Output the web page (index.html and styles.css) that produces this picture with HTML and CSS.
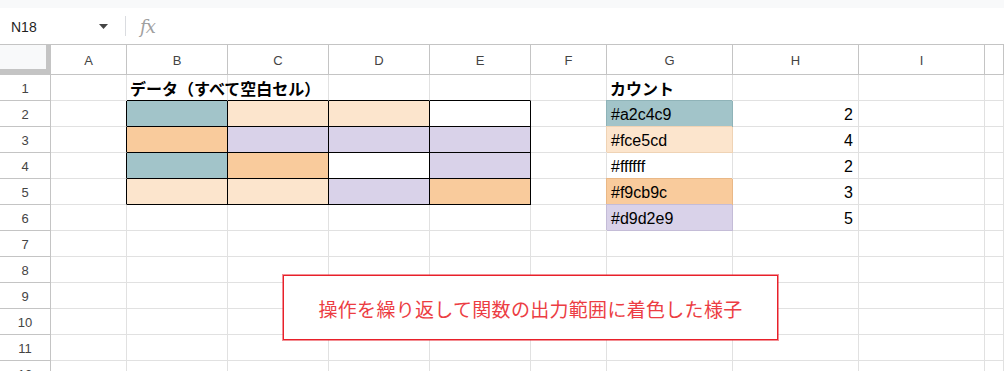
FILE: index.html
```html
<!DOCTYPE html>
<html lang="ja">
<head>
<meta charset="utf-8">
<title>Sheet</title>
<link rel="stylesheet" href="styles.css">
</head>
<body>
<div class="app">
  <div class="topstrip"></div>
  <div class="fbar">
    <div class="namebox">N18</div>
    <div class="dd"><svg width="9" height="5" viewBox="0 0 9 5"><path d="M0 0h9L4.5 5z" fill="#444"/></svg></div>
    <div class="sep"></div>
    <div class="fx">fx</div>
  </div>
  <div class="sheet">
    <div class="corner"></div>
    <div class="ch">A</div><div class="ch">B</div><div class="ch">C</div><div class="ch">D</div><div class="ch">E</div><div class="ch">F</div><div class="ch">G</div><div class="ch">H</div><div class="ch">I</div><div class="ch"></div>

    <div class="rh">1</div>
    <div class="c"></div><div class="c bb"><span class="title">データ（すべて空白セル）</span></div><div class="c bb"></div><div class="c bb"></div><div class="c bb"></div><div class="c"></div><div class="c"><span class="title">カウント</span></div><div class="c"></div><div class="c"></div><div class="c"></div>

    <div class="rh">2</div>
    <div class="c br"></div><div class="c t teal"></div><div class="c t peach"></div><div class="c t peach"></div><div class="c t"></div><div class="c"></div><div class="c g gteal">#a2c4c9</div><div class="c num">2</div><div class="c"></div><div class="c"></div>

    <div class="rh">3</div>
    <div class="c br"></div><div class="c t orange"></div><div class="c t lav"></div><div class="c t lav"></div><div class="c t lav"></div><div class="c"></div><div class="c g gpeach">#fce5cd</div><div class="c num">4</div><div class="c"></div><div class="c"></div>

    <div class="rh">4</div>
    <div class="c br"></div><div class="c t teal"></div><div class="c t orange"></div><div class="c t"></div><div class="c t lav"></div><div class="c"></div><div class="c g">#ffffff</div><div class="c num">2</div><div class="c"></div><div class="c"></div>

    <div class="rh">5</div>
    <div class="c br"></div><div class="c t peach"></div><div class="c t peach"></div><div class="c t lav"></div><div class="c t orange"></div><div class="c"></div><div class="c g gorange">#f9cb9c</div><div class="c num">3</div><div class="c"></div><div class="c"></div>

    <div class="rh">6</div>
    <div class="c"></div><div class="c"></div><div class="c"></div><div class="c"></div><div class="c"></div><div class="c"></div><div class="c g glav">#d9d2e9</div><div class="c num">5</div><div class="c"></div><div class="c"></div>

    <div class="rh">7</div>
    <div class="c"></div><div class="c"></div><div class="c"></div><div class="c"></div><div class="c"></div><div class="c"></div><div class="c"></div><div class="c"></div><div class="c"></div><div class="c"></div>

    <div class="rh">8</div>
    <div class="c"></div><div class="c"></div><div class="c"></div><div class="c"></div><div class="c"></div><div class="c"></div><div class="c"></div><div class="c"></div><div class="c"></div><div class="c"></div>

    <div class="rh">9</div>
    <div class="c"></div><div class="c"></div><div class="c"></div><div class="c"></div><div class="c"></div><div class="c"></div><div class="c"></div><div class="c"></div><div class="c"></div><div class="c"></div>

    <div class="rh">10</div>
    <div class="c"></div><div class="c"></div><div class="c"></div><div class="c"></div><div class="c"></div><div class="c"></div><div class="c"></div><div class="c"></div><div class="c"></div><div class="c"></div>

    <div class="rh">11</div>
    <div class="c"></div><div class="c"></div><div class="c"></div><div class="c"></div><div class="c"></div><div class="c"></div><div class="c"></div><div class="c"></div><div class="c"></div><div class="c"></div>

    <div class="rh">12</div>
    <div class="c"></div><div class="c"></div><div class="c"></div><div class="c"></div><div class="c"></div><div class="c"></div><div class="c"></div><div class="c"></div><div class="c"></div><div class="c"></div>
  </div>
  <div class="callout">操作を繰り返して関数の出力範囲に着色した様子</div>
</div>
</body>
</html>
```

FILE: styles.css
```css
* { box-sizing: border-box; }
html, body { margin: 0; padding: 0; background: #fff; }
body {
  width: 1004px;
  height: 371px;
  overflow: hidden;
  font-family: "Liberation Sans", Arial, "Noto Sans CJK JP", sans-serif;
}
.app { position: relative; width: 1004px; }
.topstrip { height: 8px; background: #f8f9fa; }
.fbar {
  height: 37px;
  border-bottom: 1px solid #c4c4c4;
  display: flex;
  align-items: center;
  padding-left: 11px;
}
.namebox {
  font-size: 14px;
  color: #1f1f1f;
  width: 88px;
  padding-top: 1px;
}
.dd { width: 26px; display: flex; align-items: center; padding-top: 1px; }
.sep { width: 1px; height: 20px; background: #dadce0; }
.fx {
  margin-left: 14px;
  font-family: "DejaVu Serif", "Liberation Serif", serif;
  font-style: italic;
  font-size: 18px;
  color: #a0a0a0;
  letter-spacing: -1px;
}
.sheet {
  display: grid;
  grid-template-columns: 51px 76px 101px 101px 101px 101px 76px 126px 126px 126px 1fr;
  grid-template-rows: 30px repeat(12, 26px);
}
.corner {
  background: #f8f9fa;
  border-right: 5px solid #c4c4c4;
  border-bottom: 6px solid #c4c4c4;
}
.ch {
  border-right: 1px solid #c4c4c4;
  border-bottom: 1px solid #c4c4c4;
  display: flex;
  align-items: center;
  justify-content: center;
  font-size: 13px;
  color: #444;
  padding-top: 1px;
}
.rh {
  border-right: 1px solid #c4c4c4;
  border-bottom: 1px solid #c4c4c4;
  display: flex;
  align-items: center;
  justify-content: center;
  font-size: 13px;
  color: #444;
  padding-top: 1px;
}
.c {
  border-right: 1px solid #e1e1e1;
  border-bottom: 1px solid #e1e1e1;
  display: flex;
  align-items: center;
  padding: 1px 3px 0 3px;
  font-size: 16px;
  color: #000;
  white-space: nowrap;
  overflow: visible;
}
.title {
  font-family: "Noto Sans CJK JP", sans-serif;
  font-weight: 700;
  font-size: 16px;
  position: relative;
  z-index: 1;
}
.bb { border-bottom-color: #000; }
.br { border-right-color: #000; }
.t { border-right-color: #000; border-bottom-color: #000; }
.teal { background: #a2c4c9; }
.peach { background: #fce5cd; }
.orange { background: #f9cb9c; }
.lav { background: #d9d2e9; }
.g { padding-left: 4px; padding-top: 2px; }
.gteal { background: #a2c4c9; border-color: #8fb3b8; box-shadow: -1px -1px 0 0 #8fb3b8; }
.gpeach { background: #fce5cd; border-color: #efd3b5; box-shadow: -1px -1px 0 0 #efd3b5; }
.gorange { background: #f9cb9c; border-color: #e9b887; box-shadow: -1px -1px 0 0 #e9b887; }
.glav { background: #d9d2e9; border-color: #c4bcd7; box-shadow: -1px -1px 0 0 #c4bcd7; }
.num { justify-content: flex-end; padding-right: 5px; padding-top: 2px; }
.callout {
  position: absolute;
  left: 283px;
  top: 275px;
  width: 495px;
  height: 65px;
  border: 1px solid #e8202a;
  outline: 0.5px solid rgba(232, 32, 42, 0.5);
  background: #fff;
  display: flex;
  align-items: center;
  justify-content: center;
  color: #ec3d43;
  font-family: "Noto Sans CJK JP", sans-serif;
  font-size: 19px;
  letter-spacing: 0.3px;
  padding-top: 1px;
}
```
